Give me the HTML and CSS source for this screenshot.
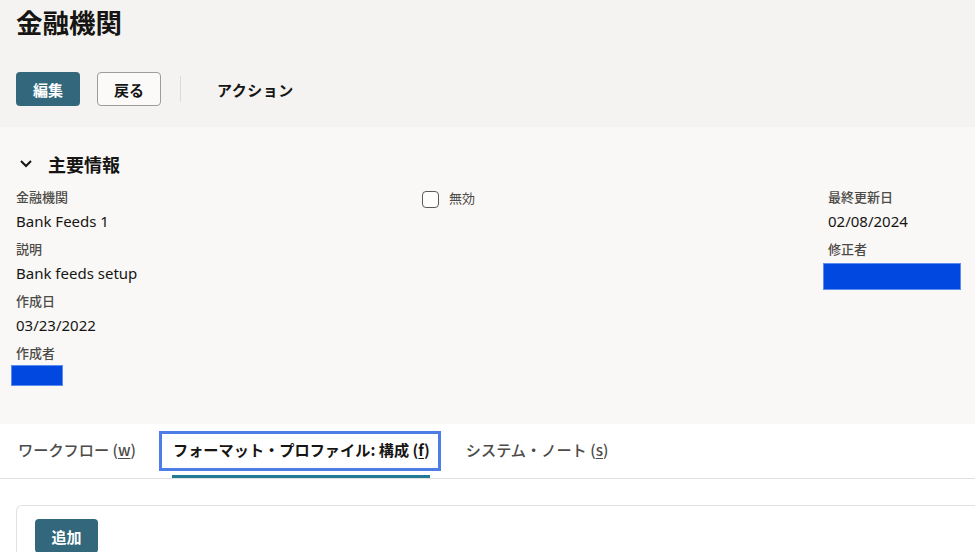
FILE: index.html
```
<!DOCTYPE html>
<html lang="ja">
<head>
<meta charset="utf-8">
<link rel="stylesheet" href="styles.css">
</head>
<body>
<header class="page-header">
  <h1 class="page-title">金融機関</h1>
  <div class="toolbar">
    <button class="btn btn-primary">編集</button>
    <button class="btn btn-secondary">戻る</button>
    <span class="toolbar-sep"></span>
    <button class="btn btn-text">アクション</button>
  </div>
</header>

<section class="primary-info">
  <div class="section-title">
    <svg class="chevron" width="14" height="10" viewBox="0 0 14 10"><polyline points="2,2 7,7 12,2" fill="none" stroke="#161513" stroke-width="2"/></svg>
    <span>主要情報</span>
  </div>
  <div class="fields">
    <div class="col">
      <div class="field"><div class="label">金融機関</div><div class="value">Bank Feeds 1</div></div>
      <div class="field"><div class="label">説明</div><div class="value">Bank feeds setup</div></div>
      <div class="field"><div class="label">作成日</div><div class="value">03/23/2022</div></div>
      <div class="field"><div class="label">作成者</div><div class="redact redact-small"></div></div>
    </div>
    <div class="col">
      <label class="check"><span class="checkbox"></span><span class="check-label">無効</span></label>
    </div>
    <div class="col">
      <div class="field"><div class="label">最終更新日</div><div class="value">02/08/2024</div></div>
      <div class="field"><div class="label">修正者</div><div class="redact redact-large"></div></div>
    </div>
  </div>
</section>

<nav class="tabs">
  <div class="tab">ワークフロー (<u>w</u>)</div>
  <div class="tab active"><span class="tab-label">フォーマット・プロファイル: 構成 (<u>f</u>)</span></div>
  <div class="tab">システム・ノート (<u>s</u>)</div>
</nav>

<main class="tab-body">
  <div class="card">
    <button class="btn btn-primary btn-add">追加</button>
  </div>
</main>
</body>
</html>
```

FILE: styles.css
```
* { box-sizing: border-box; }
html, body { margin: 0; padding: 0; }
body {
  width: 975px;
  height: 552px;
  overflow: hidden;
  background: #ffffff;
  font-family: "Noto Sans", "Noto Sans CJK JP", sans-serif;
  color: #161513;
}

.page-header {
  background: #f4f3f1;
  height: 127px;
  padding: 6px 16px 0;
}
.page-title {
  margin: 0;
  font-size: 26.5px;
  line-height: 32px;
  font-weight: 700;
  font-family: "Noto Sans CJK JP", sans-serif;
}
.toolbar {
  display: flex;
  align-items: center;
  margin-top: 34px;
  height: 34px;
}
.btn {
  font-family: "Noto Sans CJK JP", sans-serif;
  font-size: 15px;
  font-weight: 700;
  height: 34px;
  padding: 0;
  border-radius: 4px;
  cursor: pointer;
}
.btn-primary {
  background: #33687c;
  color: #ffffff;
  border: none;
  width: 64px;
}
.btn-secondary {
  margin-left: 17px;
  width: 64px;
  background: #fbfaf9;
  border: 1px solid #9e9c99;
  color: #161513;
}
.toolbar-sep {
  width: 1px;
  height: 26px;
  background: #dcdad6;
  margin-left: 19px;
}
.btn-text {
  margin-left: 24px;
  background: transparent;
  border: none;
  padding: 0 12px;
  color: #161513;
  letter-spacing: 0.5px;
}

.primary-info {
  background: #f9f8f6;
  height: 297px;
  padding: 25px 16px 0;
}
.section-title {
  display: flex;
  align-items: center;
  height: 24px;
  font-family: "Noto Sans CJK JP", sans-serif;
  font-size: 18px;
  font-weight: 700;
}
.chevron { margin-left: 3px; margin-right: 15px; }
.fields {
  display: grid;
  grid-template-columns: 406px 406px 1fr;
  margin-top: 11px;
}
.field { margin-bottom: 6px; }
.label {
  font-family: "Noto Sans CJK JP", sans-serif;
  font-size: 13px;
  line-height: 20px;
  height: 20px;
  color: #4d4b48;
  font-weight: 500;
}
.value {
  font-size: 15px;
  line-height: 24px;
  height: 24px;
  margin-top: 2px;
  color: #161513;
}
.redact {
  background: #0048e0;
  border: 1px solid #5b8cf0;
  margin-left: -5px;
}
.redact-small { width: 52px; height: 21px; margin-top: 2px; }
.redact-large { width: 138px; height: 27px; margin-top: 4px; }

.check {
  display: flex;
  align-items: center;
  height: 20px;
}
.checkbox {
  width: 17px;
  height: 17px;
  border: 1.5px solid #5c5a57;
  border-radius: 4px;
  background: #ffffff;
  margin-top: 4px;
}
.check-label {
  margin-left: 10px;
  font-family: "Noto Sans CJK JP", sans-serif;
  font-size: 13px;
  color: #4d4b48;
}

.tabs {
  display: flex;
  height: 55px;
  border-bottom: 1px solid #e1e0de;
  padding-left: 18px;
  gap: 36px;
}
.tab {
  display: flex;
  align-items: center;
  height: 54px;
  padding-bottom: 5px;
  font-family: "Noto Sans CJK JP", sans-serif;
  font-size: 15.2px;
  font-weight: 500;
  color: #4d4b48;
  position: relative;
}
.tab u { text-underline-offset: 2px; }
.tab.active {
  color: #161513;
  font-weight: 700;
  border-bottom: 3px solid #227b96;
  padding-bottom: 2px;
  padding-left: 1px;
}
.tab-label {
  position: relative;
  line-height: 20px;
}
.tab-label::after {
  content: "";
  position: absolute;
  left: -14px;
  right: -11px;
  top: -8px;
  bottom: -12px;
  border: 3px solid #4d7ee8;
}

.tab-body {
  padding: 26px 0 0 16px;
}
.card {
  border: 1px solid #e3e2e0;
  border-right: none;
  border-bottom: none;
  border-radius: 6px 0 0 0;
  height: 47px;
  padding: 13px 18px 0;
  overflow: hidden;
}
.btn-add { width: 63px; }
```
